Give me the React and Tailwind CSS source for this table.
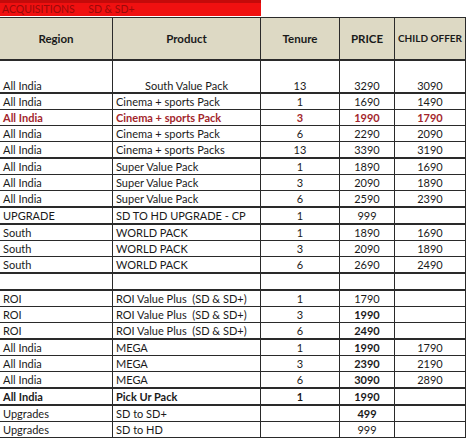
const rows = [
  { r: "All India", p: "South Value Pack", t: "13", pr: "3290", c: "3090", first: true, thick: true },
  { r: "All India", p: "Cinema + sports Pack", t: "1", pr: "1690", c: "1490" },
  { r: "All India", p: "Cinema + sports Pack", t: "3", pr: "1990", c: "1790", red: true },
  { r: "All India", p: "Cinema + sports Pack", t: "6", pr: "2290", c: "2090" },
  { r: "All India", p: "Cinema + sports Packs", t: "13", pr: "3390", c: "3190", thick: true },
  { r: "All India", p: "Super Value Pack", t: "1", pr: "1890", c: "1690" },
  { r: "All India", p: "Super Value Pack", t: "3", pr: "2090", c: "1890" },
  { r: "All India", p: "Super Value Pack", t: "6", pr: "2590", c: "2390", thick: true },
  { r: "UPGRADE", p: "SD TO HD UPGRADE - CP", t: "1", pr: "999", c: "", thick: true },
  { r: "South", p: "WORLD PACK", t: "1", pr: "1890", c: "1690" },
  { r: "South", p: "WORLD PACK", t: "3", pr: "2090", c: "1890" },
  { r: "South", p: "WORLD PACK", t: "6", pr: "2690", c: "2490", thick: true },
  { r: "", p: "", t: "", pr: "", c: "", thick: true },
  { r: "ROI", p: "ROI Value Plus  (SD & SD+)", t: "1", pr: "1790", c: "" },
  { r: "ROI", p: "ROI Value Plus  (SD & SD+)", t: "3", pr: "1990", c: "", bp: true },
  { r: "ROI", p: "ROI Value Plus  (SD & SD+)", t: "6", pr: "2490", c: "", bp: true, thick: true },
  { r: "All India", p: "MEGA", t: "1", pr: "1990", c: "1790", bp: true },
  { r: "All India", p: "MEGA", t: "3", pr: "2390", c: "2190", bp: true },
  { r: "All India", p: "MEGA", t: "6", pr: "3090", c: "2890", bp: true, thick: true },
  { r: "All India", p: "Pick Ur Pack", t: "1", pr: "1990", c: "", bold: true, thick: true },
  { r: "Upgrades", p: "SD to SD+", t: "", pr: "499", c: "", bp: true },
  { r: "Upgrades", p: "SD to HD", t: "", pr: "999", c: "" },
];

const grid = "grid grid-cols-[113px_148px_79px_55px_70px]";

export default function App() {
  return (
    <div
      className="w-[467px] h-[441px] bg-white overflow-hidden text-[#1a1a1a]"
      style={{ fontFamily: "Lato, 'Liberation Sans', sans-serif" }}
    >
      {/* title bar */}
      <div className="w-[261px] h-[16px] bg-[#f01010] border-t-[3px] border-[#c40a0a] flex items-center pl-[2px] text-[10.5px] leading-none text-[#9a0a0a] whitespace-pre">
        ACQUISITIONS     SD &amp; SD+
      </div>

      {/* header */}
      <div className={`${grid} w-[466px] h-[44px] mt-[1px] bg-[#ddd9c4] border-t border-b-2 border-r border-[#2a2a2a] text-[11.5px] font-bold whitespace-nowrap`}>
        <div className="flex items-center justify-center border-r border-[#2a2a2a]">Region</div>
        <div className="flex items-center justify-center border-r border-[#2a2a2a]">Product</div>
        <div className="flex items-center justify-center border-r border-[#2a2a2a]">Tenure</div>
        <div className="flex items-center justify-center border-r border-[#2a2a2a]">PRICE</div>
        <div className="flex items-center justify-center text-[10px]">CHILD OFFER</div>
      </div>

      {rows.map((row, i) => {
        const h = row.first ? "h-[31px] items-end pb-[1px]" : "h-[15px] items-center";
        const b = row.thick ? "border-b-2" : "border-b";
        const color = row.red ? "text-[#a3262c] font-bold" : "";
        const wt = row.bold ? "font-bold" : "";
        return (
          <div key={i} className={`${grid} w-[466px] ${b} border-r border-[#2a2a2a] text-[11px] leading-none ${color} ${wt}`}>
            <div className={`flex ${h} pl-[3px] border-r border-[#2a2a2a]`}>{row.r}</div>
            <div className={`flex ${h} ${row.first ? "justify-center" : "pl-[3px]"} border-r border-[#2a2a2a] whitespace-pre`}>{row.p}</div>
            <div className={`flex ${h} justify-center border-r border-[#2a2a2a]`}>{row.t}</div>
            <div className={`flex ${h} justify-center border-r border-[#2a2a2a] ${row.bp ? "font-bold" : ""}`}>{row.pr}</div>
            <div className={`flex ${h} justify-center`}>{row.c}</div>
          </div>
        );
      })}
    </div>
  );
}
